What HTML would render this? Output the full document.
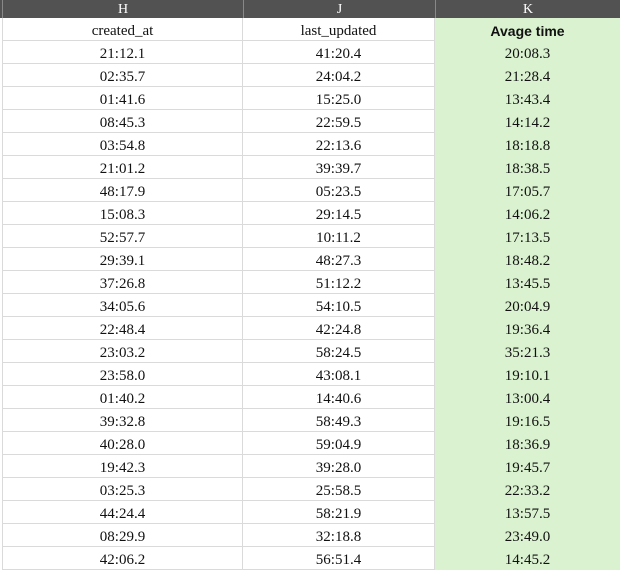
<!DOCTYPE html><html><head><style>
body{margin:0;width:620px;height:565px;overflow:hidden;background:#fff;font-family:"Liberation Serif",serif;}
.hd{position:absolute;top:0;height:18px;background:#525252;color:#fff;font-size:14px;line-height:19px;text-align:center;}
.c{position:absolute;height:23px;line-height:26px;text-align:center;font-size:15px;color:#111;box-sizing:border-box;}
.h{left:2px;width:241px;border-bottom:1px solid #dadada;border-right:1px solid #dadada;border-left:1px solid #dadada}
.j{left:243px;width:192px;border-bottom:1px solid #dadada;border-right:1px solid #dadada}
.k{left:435px;width:185px;background:#daf2d0;}
</style></head><body>
<div class="hd" style="left:0;width:2px"></div>
<div class="hd" style="left:2px;width:241px;border-left:1px solid #888;box-sizing:border-box">H</div>
<div class="hd" style="left:243px;width:192px;border-left:1px solid #888;box-sizing:border-box">J</div>
<div class="hd" style="left:435px;width:185px;border-left:1px solid #888;box-sizing:border-box">K</div>
<div id="g"></div>
<script>
var H=["created_at","21:12.1","02:35.7","01:41.6","08:45.3","03:54.8","21:01.2","48:17.9","15:08.3","52:57.7","29:39.1","37:26.8","34:05.6","22:48.4","23:03.2","23:58.0","01:40.2","39:32.8","40:28.0","19:42.3","03:25.3","44:24.4","08:29.9","42:06.2"];
var J=["last_updated","41:20.4","24:04.2","15:25.0","22:59.5","22:13.6","39:39.7","05:23.5","29:14.5","10:11.2","48:27.3","51:12.2","54:10.5","42:24.8","58:24.5","43:08.1","14:40.6","58:49.3","59:04.9","39:28.0","25:58.5","58:21.9","32:18.8","56:51.4"];
var K=["Avage time","20:08.3","21:28.4","13:43.4","14:14.2","18:18.8","18:38.5","17:05.7","14:06.2","17:13.5","18:48.2","13:45.5","20:04.9","19:36.4","35:21.3","19:10.1","13:00.4","19:16.5","18:36.9","19:45.7","22:33.2","13:57.5","23:49.0","14:45.2"];
var s="";
for(var i=0;i<24;i++){var t=18+23*i;
s+='<div class="c h" style="top:'+t+'px">'+H[i]+'</div><div class="c j" style="top:'+t+'px">'+J[i]+'</div>';
s+='<div class="c k" style="top:'+t+'px;'+(i==0?'font-family:\'Liberation Sans\',sans-serif;font-weight:bold;font-size:14px':'')+'">'+K[i]+'</div>';}
document.getElementById("g").innerHTML=s;
</script>
</body></html>
